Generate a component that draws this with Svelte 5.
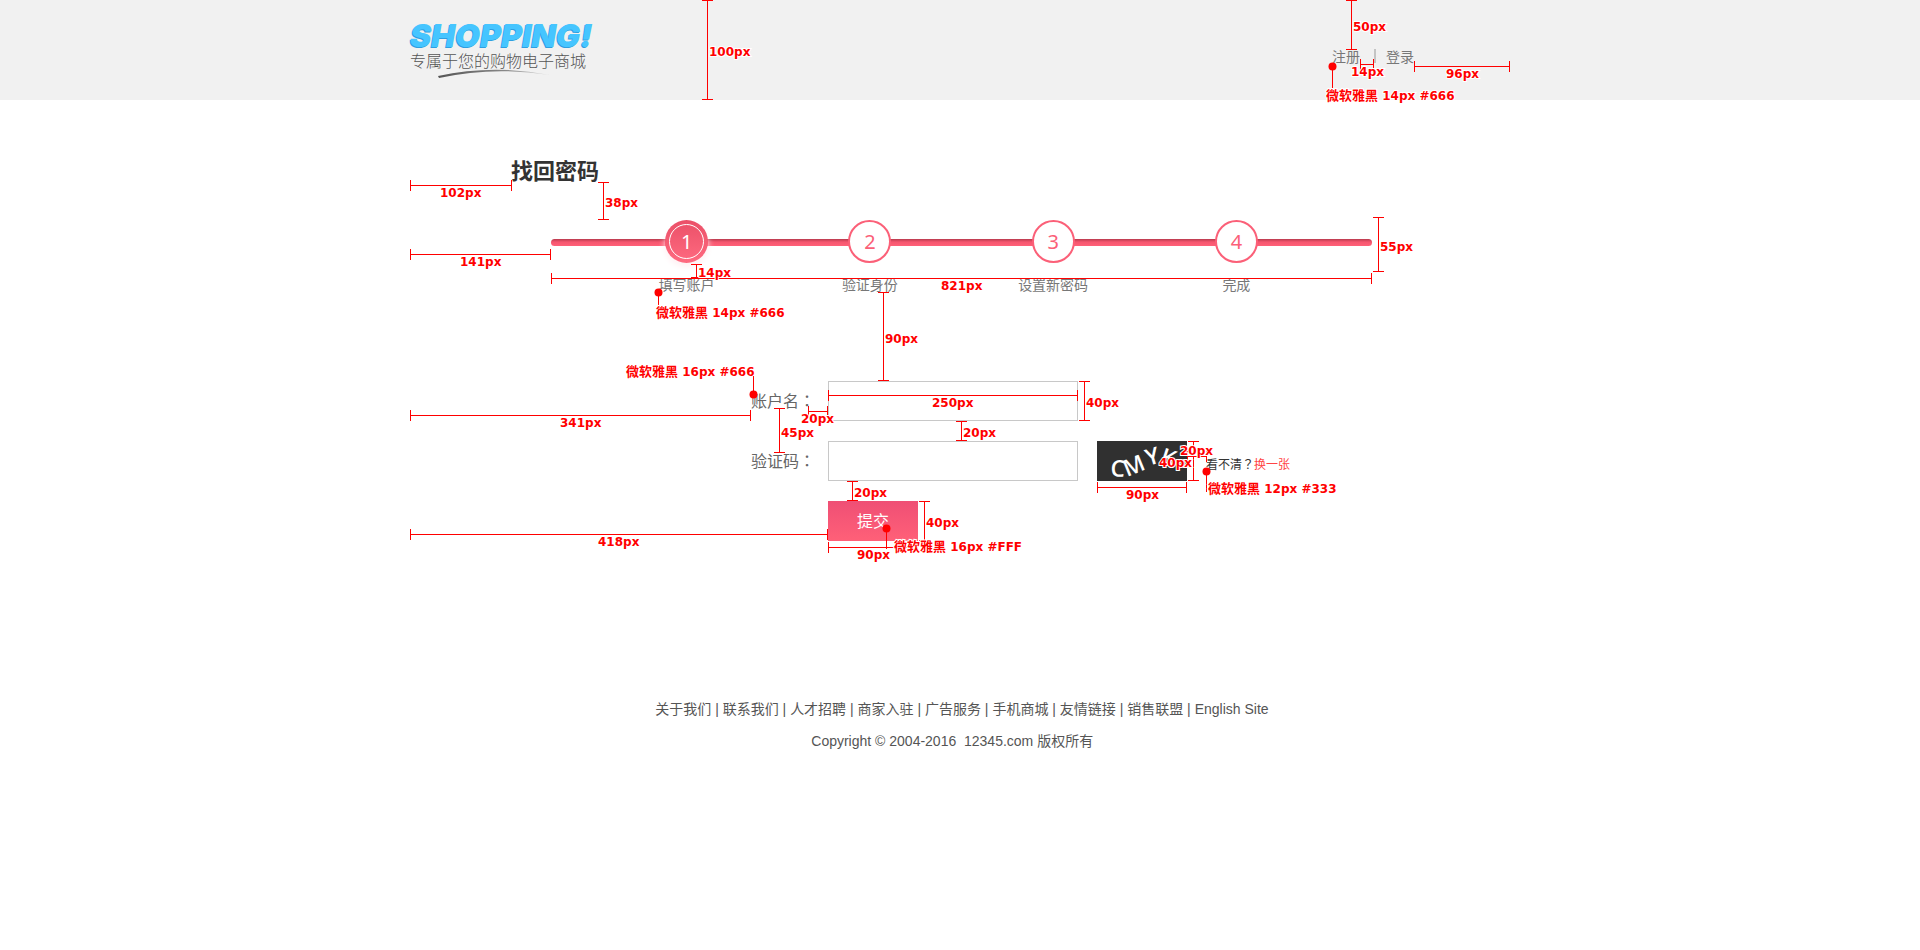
<script>
  const steps = ['填写账户', '验证身份', '设置新密码', '完成'];
  const links = ['关于我们', '联系我们', '人才招聘', '商家入驻', '广告服务', '手机商城', '友情链接', '销售联盟', 'English Site'];

  // Horizontal dimensions: start x, end x, y, label, label x, label baseline
  const across = [
    [950, 963, 64, '14px', 941, 76],
    [1004, 1099, 66, '96px', 1036, 78],
    [0, 101, 185, '102px', 30, 197],
    [0, 140, 254, '141px', 50, 266],
    [141, 961, 278, '821px', 531, 290],
    [0, 340, 415, '341px', 150, 427],
    [398, 417, 411, '20px', 391, 423],
    [0, 417, 534, '418px', 188, 546],
    [418, 667, 395, '250px', 522, 407],
    [418, 507, 547, '90px', 447, 559],
    [687, 776, 487, '90px', 716, 499],
    [777, 796, 456, '20px', 770, 455]
  ];

  // Vertical dimensions: x, top, bottom, label, label x, label baseline
  const down = [
    [297, 0, 99, '100px', 299, 56],
    [941, 0, 49, '50px', 943, 31],
    [193, 182, 219, '38px', 195, 207],
    [286, 264, 277, '14px', 288, 277],
    [473, 292, 380, '90px', 475, 343],
    [968, 217, 271, '55px', 970, 251],
    [369, 408, 452, '45px', 371, 437],
    [551, 421, 440, '20px', 553, 437],
    [442, 481, 500, '20px', 444, 497],
    [514, 501, 540, '40px', 516, 527],
    [674, 381, 420, '40px', 676, 407],
    [783, 441, 480, '40px', 749, 467]
  ];

  // Type notes: dot x, dot y, line end y, text, text x, baseline
  const notes = [
    [922, 66, 88, '14px #666', 916, 100],
    [248, 292, 306, '14px #666', 246, 317],
    [343, 394, 376, '16px #666', 216, 376],
    [476, 528, 549, '16px #FFF', 484, 551],
    [796, 471, 492, '12px #333', 798, 493]
  ];
</script>

<div class="page">
  <header>
    <div class="wrap top">
      <a class="logo" href="#home">
        <span class="brand">SHOPPING!</span>
        <span class="tagline">专属于您的购物电子商城</span>
        <svg class="swoosh" width="114" height="10" viewBox="0 0 114 10" aria-hidden="true">
          <defs>
            <linearGradient id="ink" x1="0" x2="1">
              <stop offset="0" stop-color="#555" />
              <stop offset="0.6" stop-color="#888" />
              <stop offset="1" stop-color="#ddd" />
            </linearGradient>
          </defs>
          <path d="M0 7Q55-5 112 6Q55-3 1 9Z" fill="url(#ink)" />
        </svg>
      </a>
      <nav>
        <a href="#register">注册</a>
        <span class="bar"></span>
        <a href="#login">登录</a>
      </nav>
    </div>
  </header>

  <main class="wrap">
    <h1>找回密码</h1>

    <ol class="steps">
      {#each steps as step, i}
        <li class:current={i === 0}>
          <span class="disc"><span class="num">{i + 1}</span></span>
          <span class="name">{step}</span>
        </li>
      {/each}
    </ol>

    <form onsubmit={(e) => e.preventDefault()}>
      <label for="account">账户名<span class="mark">：</span></label>
      <div class="field"><input id="account" type="text" /></div>
      <label for="code">验证码<span class="mark">：</span></label>
      <div class="field">
        <input id="code" type="text" />
        <svg class="captcha" width="90" height="40" viewBox="0 0 90 40">
          <rect width="90" height="40" fill="#303030" />
          <g fill="#fff" font-family="Open Sans, sans-serif" font-size="23" font-weight="600">
            <text transform="translate(13 35) rotate(4)">C</text>
            <text transform="translate(30 36) rotate(-22)">M</text>
            <text transform="translate(51 25) rotate(-16)">Y</text>
            <text transform="translate(62 22) rotate(18)">K</text>
          </g>
        </svg>
        <p>看不清<span class="mark">？</span><a href="#refresh">换一张</a></p>
      </div>
      <button type="submit">提交</button>
    </form>
  </main>

  <footer>
    <p>&nbsp;{#each links as link, i}{#if i}{' | '}{/if}<a href="#link{i}">{link}</a>{/each}</p>
    <p>Copyright © 2004-2016 &nbsp;12345.com 版权所有&nbsp;&nbsp;&nbsp;&nbsp;</p>
  </footer>

  <div class="overlay">
    <svg width="1100" height="600" viewBox="0 0 1100 600">
      <g class="rules">
        {#each across as [x1, x2, y]}
          <path d="M{x1} {y}.5H{x2 + 1}M{x1}.5 {y - 5}v11M{x2}.5 {y - 5}v11" />
        {/each}
        {#each down as [x, y1, y2]}
          <path d="M{x}.5 {y1}V{y2 + 1}M{x - 5} {y1}.5h11M{x - 5} {y2}.5h11" />
        {/each}
        {#each notes as [x, y, end]}
          <path d="M{x}.5 {y}V{end}" />
          <circle cx={x + 0.5} cy={y + 0.5} r="4" />
        {/each}
      </g>
      <g class="labels">
        {#each [...across, ...down] as [, , , text, x, y]}
          <text {x} {y}>{text}</text>
        {/each}
        {#each notes as [, , , text, x, y]}
          <text {x} {y}><tspan class="face">微软雅黑</tspan> {text}</text>
        {/each}
      </g>
    </svg>
  </div>
</div>

<style>
  :global(body) {
    margin: 0;
    background: #fff;
  }

  .page {
    position: relative;
    font-family: "Noto Sans CJK SC", sans-serif;
    font-size: 14px;
    color: #777;
  }

  .wrap {
    max-width: 1100px;
    margin: 0 auto;
  }

  a {
    color: inherit;
    text-decoration: none;
  }

  header {
    background: #f1f1f1;
  }

  .top {
    display: flex;
    justify-content: space-between;
    height: 100px;
  }

  .logo {
    display: flex;
    flex-direction: column;
    padding-top: 20px;
  }

  .brand {
    font-family: Inter, sans-serif;
    font-size: 32px;
    font-weight: 900;
    font-style: italic;
    line-height: 32px;
    color: #46c5ff;
    text-shadow: -1px 1px 0 #2f9fe0;
  }

  .tagline {
    font-size: 16px;
    font-weight: 300;
    line-height: 16px;
    color: #555;
  }

  .swoosh {
    margin: 1px 0 0 28px;
  }

  nav {
    display: flex;
    align-items: center;
    height: 16px;
    padding: 48px 96px 0 0;
  }

  .bar {
    width: 2px;
    height: 14px;
    margin: 0 10px 0 14px;
    background: #c4c4c4;
  }

  main {
    padding-top: 53px;
  }

  h1 {
    margin: 0 0 35px;
    padding-left: 101px;
    font-size: 22px;
    font-weight: 700;
    line-height: 32px;
    color: #333;
  }

  .steps {
    position: relative;
    display: grid;
    grid-template-columns: repeat(4, 1fr);
    margin: 0 138px 86px 141px;
    padding: 0 44px;
    list-style: none;
  }

  .steps::before {
    content: "";
    position: absolute;
    top: 19px;
    left: 0;
    right: 0;
    height: 7px;
    border-radius: 4px;
    background: linear-gradient(#b93a4d, #f5566f 3px, #ff6078);
  }

  li {
    position: relative;
    display: flex;
    flex-direction: column;
    align-items: center;
    gap: 14px;
  }

  .disc {
    display: flex;
    box-sizing: border-box;
    width: 43px;
    height: 43px;
    padding: 2px;
    border: 2px solid #fb6078;
    border-radius: 50%;
    background: #fff;
  }

  .num {
    flex: 1;
    font-family: "Noto Sans", sans-serif;
    font-size: 20px;
    line-height: 35px;
    text-align: center;
    color: #fb6078;
  }

  .current .disc {
    padding: 4px;
    border: 0;
    background: linear-gradient(#ea5068, #ff6a80);
    box-shadow: 0 4px 6px #fff0f2;
  }

  .current .num {
    border: 1px solid #fff;
    border-radius: 50%;
    line-height: 33px;
    color: #fff;
  }

  .name {
    height: 18px;
    line-height: 14px;
  }

  form {
    display: grid;
    grid-template-columns: 77px 1fr;
    row-gap: 20px;
    padding-left: 341px;
  }

  label {
    font-size: 16px;
    line-height: 38px;
    color: #666;
  }

  .mark {
    font-family: "Noto Sans CJK TC", sans-serif;
  }

  .field {
    display: flex;
    height: 40px;
  }

  input {
    box-sizing: border-box;
    width: 250px;
    height: 40px;
    padding: 0 10px;
    border: 1px solid #c8c8c8;
    font: inherit;
  }

  .captcha {
    margin: 0 19px;
    overflow: visible;
  }

  .field p {
    margin: 0;
    font-size: 12px;
    line-height: 46px;
    color: #333;
  }

  .field a {
    color: #f44;
  }

  button {
    grid-column: 2;
    width: 90px;
    height: 40px;
    padding: 0 0 2px;
    border: 0;
    background: linear-gradient(#ef4f75, #ff6078);
    color: #fff;
    font: inherit;
    font-size: 16px;
  }

  footer {
    margin-top: 152px;
    padding-bottom: 60px;
    font-family: "Liberation Sans", "Noto Sans CJK SC", sans-serif;
    text-align: center;
    color: #555;
  }

  footer p {
    margin: 0;
    line-height: 32px;
  }

  .overlay {
    position: absolute;
    inset: 0;
    display: flex;
    justify-content: center;
    pointer-events: none;
  }

  .overlay svg {
    flex: none;
  }

  .rules path {
    fill: none;
    stroke: #f00;
  }

  .rules circle {
    fill: #f00;
  }

  .labels {
    font-family: "DejaVu Sans", "Noto Sans CJK SC", sans-serif;
    font-size: 12px;
    font-weight: 700;
    fill: #f00;
    stroke: #fff;
    stroke-width: 2px;
    paint-order: stroke;
  }

  .face {
    font-family: "Noto Sans CJK SC", sans-serif;
    font-size: 13px;
  }
</style>
